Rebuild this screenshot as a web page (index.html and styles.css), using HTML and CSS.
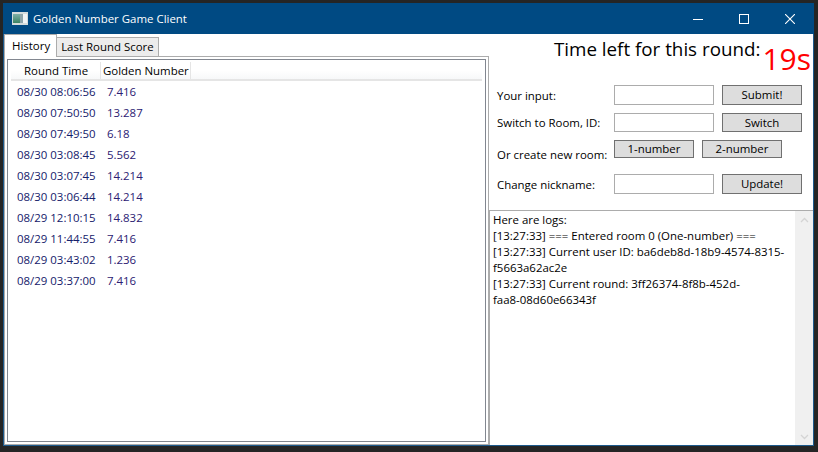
FILE: index.html
```html
<!DOCTYPE html>
<html>
<head>
	<title>Golden Number Game Client</title>
	<link rel="stylesheet" href="styles.css">
</head>
<body>
	<div id="window">
		<div id="titlebar">
			<svg class="app-icon" width="16" height="13" viewBox="0 0 16 13">
				<defs>
					<linearGradient id="pane" x1="0" y1="0" x2="0" y2="1">
						<stop offset="0" stop-color="#7fb0a8"/>
						<stop offset="1" stop-color="#3c8464"/>
					</linearGradient>
				</defs>
				<rect width="16" height="13" fill="#d5dcdc"/>
				<rect x="1" y="2" width="7" height="9" fill="url(#pane)"/>
				<rect x="8" y="2" width="3" height="9" fill="#8fa6ab"/>
				<rect x="11" y="2" width="4" height="9" fill="#f2f5f5"/>
			</svg>
			<span class="title">Golden Number Game Client</span>
			<div class="controls">
				<div class="control"><svg width="10" height="10" viewBox="0 0 10 10"><path d="M0 5.5H10" stroke="#fff"/></svg></div>
				<div class="control"><svg width="10" height="10" viewBox="0 0 10 10"><rect x="0.5" y="0.5" width="9" height="9" fill="none" stroke="#fff"/></svg></div>
				<div class="control"><svg width="10" height="10" viewBox="0 0 10 10"><path d="M0 0L10 10M10 0L0 10" stroke="#fff" stroke-width="1.1"/></svg></div>
			</div>
		</div>
		<div id="content">
			<div id="left">
				<div class="tabs">
					<div class="tab active">History</div>
					<div class="tab">Last Round Score</div>
				</div>
				<div class="tab-panel">
					<div class="list">
						<div class="list-head">
							<div class="col-time">Round Time</div>
							<div class="col-num">Golden Number</div>
						</div>
						<div class="row"><span class="time">08/30 08:06:56</span><span class="num">7.416</span></div>
						<div class="row"><span class="time">08/30 07:50:50</span><span class="num">13.287</span></div>
						<div class="row"><span class="time">08/30 07:49:50</span><span class="num">6.18</span></div>
						<div class="row"><span class="time">08/30 03:08:45</span><span class="num">5.562</span></div>
						<div class="row"><span class="time">08/30 03:07:45</span><span class="num">14.214</span></div>
						<div class="row"><span class="time">08/30 03:06:44</span><span class="num">14.214</span></div>
						<div class="row"><span class="time">08/29 12:10:15</span><span class="num">14.832</span></div>
						<div class="row"><span class="time">08/29 11:44:55</span><span class="num">7.416</span></div>
						<div class="row"><span class="time">08/29 03:43:02</span><span class="num">1.236</span></div>
						<div class="row"><span class="time">08/29 03:37:00</span><span class="num">7.416</span></div>
					</div>
				</div>
			</div>
			<div id="right">
				<div class="timer">
					<span class="timer-label">Time left for this round:</span>
					<span class="timer-value">19s</span>
				</div>
				<div class="form">
					<div class="form-row">
						<label>Your input:</label>
						<div class="input"></div>
						<div class="button">Submit!</div>
					</div>
					<div class="form-row switch-row">
						<label>Switch to Room, ID:</label>
						<div class="input"></div>
						<div class="button">Switch</div>
					</div>
					<div class="form-row room-row">
						<label>Or create new room:</label>
						<div class="button small">1-number</div>
						<div class="button small">2-number</div>
					</div>
					<div class="form-row">
						<label>Change nickname:</label>
						<div class="input"></div>
						<div class="button">Update!</div>
					</div>
				</div>
				<div class="logs">
					<div class="log-text">
						Here are logs:<br>
						[13:27:33] === Entered room 0 (One-number) ===<br>
						[13:27:33] Current user ID: ba6deb8d-18b9-4574-8315-<br>
						f5663a62ac2e<br>
						[13:27:33] Current round: 3ff26374-8f8b-452d-<br>
						faa8-08d60e66343f
					</div>
					<div class="scrollbar">
						<svg width="9" height="6" viewBox="0 0 9 6"><path d="M1 5L4.5 1.5L8 5" fill="none" stroke="#d4d4d4" stroke-width="1.3"/></svg>
						<svg width="9" height="6" viewBox="0 0 9 6"><path d="M1 1L4.5 4.5L8 1" fill="none" stroke="#d4d4d4" stroke-width="1.3"/></svg>
					</div>
				</div>
			</div>
		</div>
	</div>
</body>
</html>
```

FILE: styles.css
```css
html {
	background: #252525;
}

body {
	margin: 0;
	padding: 3px 4px 6px 3px;
	height: 452px;
	box-sizing: border-box;
	font-family: 'Open Sans', sans-serif;
	font-size: 11.45px;
	color: #000;
	overflow: hidden;
}

#window {
	display: flex;
	flex-direction: column;
	height: 100%;
	background: #fff;
	border: 1px solid #1d5a8c;
	border-top: 0;
	box-sizing: border-box;
}

#titlebar {
	display: flex;
	align-items: center;
	height: 31px;
	flex: none;
	margin-left: -1px;
	margin-right: -1px;
	background: #004a83;
	color: #fff;
	padding-left: 9px;
	padding-right: 1px;
}

.app-icon {
	margin-right: 5px;
}

.controls {
	display: flex;
	margin-left: auto;
}

.control {
	display: flex;
	align-items: center;
	justify-content: center;
	width: 46px;
	height: 31px;
}

#content {
	display: flex;
	flex: 1;
	min-height: 0;
}

/* left side */
#left {
	display: flex;
	flex-direction: column;
	width: 485px;
	flex: none;
}

.tabs {
	display: flex;
	align-items: flex-end;
	height: 22px;
	flex: none;
}

.tab {
	height: 19px;
	line-height: 18px;
	padding: 0 4px;
	background: #ececec;
	border: 1px solid #acacac;
	border-bottom: 0;
	border-left: 0;
	box-sizing: border-box;
}

.tab.active {
	position: relative;
	height: 23px;
	margin-bottom: -1px;
	line-height: 22px;
	padding: 0 6px 0 7px;
	background: #fff;
	border-left: 1px solid #acacac;
}

.tab-panel {
	display: flex;
	flex: 1;
	min-height: 0;
	padding: 2px;
	border: 1px solid #acacac;
}

.list {
	flex: 1;
	border: 1px solid #828790;
	padding: 2px 3px 0;
	box-sizing: border-box;
}

.list-head {
	display: flex;
	height: 19px;
	line-height: 17px;
	white-space: nowrap;
	background: linear-gradient(#fff, #fff 50%, #f7f8f9);
	border-bottom: 2px solid #e5e5e5;
	box-sizing: border-box;
}

.col-time {
	width: 90px;
	padding-left: 13px;
	box-sizing: border-box;
	border-right: 1px solid #e5e5e5;
}

.col-num {
	width: 90px;
	padding-left: 2px;
	box-sizing: border-box;
	border-right: 1px solid #e5e5e5;
}

.row {
	display: flex;
	height: 21px;
	line-height: 21px;
	color: #14206a;
}

.time {
	width: 90px;
	padding-left: 6px;
	box-sizing: border-box;
}

.num {
	padding-left: 6px;
	color: #2b2072;
}

/* right side */
#right {
	display: flex;
	flex-direction: column;
	flex: 1;
	min-width: 0;
}

.timer {
	display: flex;
	justify-content: flex-end;
	height: 51px;
	flex: none;
	padding-right: 2px;
}

.timer-label {
	font-size: 18.8px;
	line-height: 30px;
}

.timer-value {
	font-size: 30px;
	line-height: 38px;
	margin: 6px 0 0 2px;
	color: #ff0000;
}

.form {
	display: flex;
	flex-direction: column;
	flex: none;
	height: 125px;
	padding-left: 8px;
}

.form-row {
	display: grid;
	grid-template-columns: 109px 100px 80px;
	grid-template-rows: 20px;
	column-gap: 8px;
	align-items: center;
	margin-bottom: 8px;
}

.form-row label {
	white-space: nowrap;
}

.switch-row {
	grid-template-rows: 19px;
}

.room-row {
	grid-template-columns: 109px 80px 80px;
	grid-template-rows: 18px;
	margin-bottom: 16px;
}

.room-row label {
	margin-top: 10px;
}

.input {
	height: 100%;
	border: 1px solid #acacac;
	background: #fff;
	box-sizing: border-box;
}

.button {
	height: 100%;
	line-height: 17px;
	text-align: center;
	background: #dddddd;
	border: 1px solid #707070;
	box-sizing: border-box;
}

.button.small {
	line-height: 15px;
}

.logs {
	display: flex;
	flex: 1;
	min-height: 0;
	border-top: 1px solid #acacac;
	border-left: 1px solid #acacac;
}

.log-text {
	flex: 1;
	padding: 1px 0 0 3px;
	line-height: 16px;
	white-space: nowrap;
}

.scrollbar {
	display: flex;
	flex-direction: column;
	justify-content: space-between;
	align-items: center;
	width: 18px;
	flex: none;
	padding: 6px 0 5px;
	background: #f0f0f0;
	box-sizing: border-box;
}
```
